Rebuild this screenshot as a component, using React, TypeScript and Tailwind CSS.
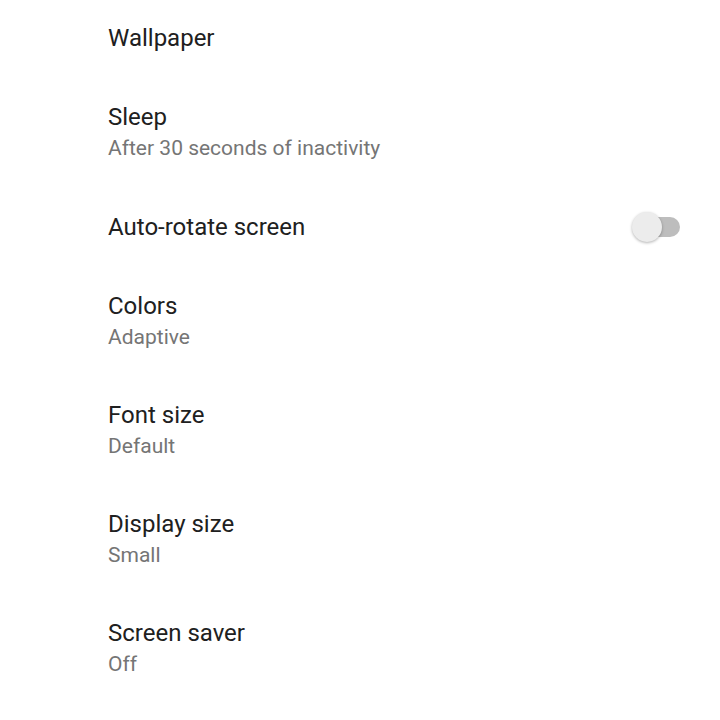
import React from "react";

type Row = { title: string; summary?: string; toggle?: boolean };

const rows: Row[] = [
  { title: "Wallpaper" },
  { title: "Sleep", summary: "After 30 seconds of inactivity" },
  { title: "Auto-rotate screen", toggle: true },
  { title: "Colors", summary: "Adaptive" },
  { title: "Font size", summary: "Default" },
  { title: "Display size", summary: "Small" },
  { title: "Screen saver", summary: "Off" },
];

function Switch() {
  return (
    <div className="relative w-[50px] h-[32px] flex items-center">
      <div className="absolute left-[14px] w-[34px] h-[20px] rounded-full bg-[#bdbdbd]" />
      <div className="absolute left-0 w-[30px] h-[30px] rounded-full bg-[#ececec] shadow-[0_1px_3px_rgba(0,0,0,0.3)]" />
    </div>
  );
}

export default function App() {
  return (
    <div
      className="w-[720px] h-[720px] overflow-hidden bg-white"
      style={{ fontFamily: "Roboto, 'Noto Sans', sans-serif" }}
    >
      <div className="-mt-[2px] flex flex-col">
        {rows.map((r) => (
          <div
            key={r.title}
            className={`flex items-center pl-[108px] pr-[38px] ${r.summary ? "h-[109px]" : "h-[80px]"}`}
          >
            <div className="flex-1 flex flex-col">
              <div className="text-[24px] leading-[31px] text-[#202020]">{r.title}</div>
              {r.summary && (
                <div className="text-[21px] leading-[30px] text-[#757575]">{r.summary}</div>
              )}
            </div>
            {r.toggle && <Switch />}
          </div>
        ))}
      </div>
    </div>
  );
}
